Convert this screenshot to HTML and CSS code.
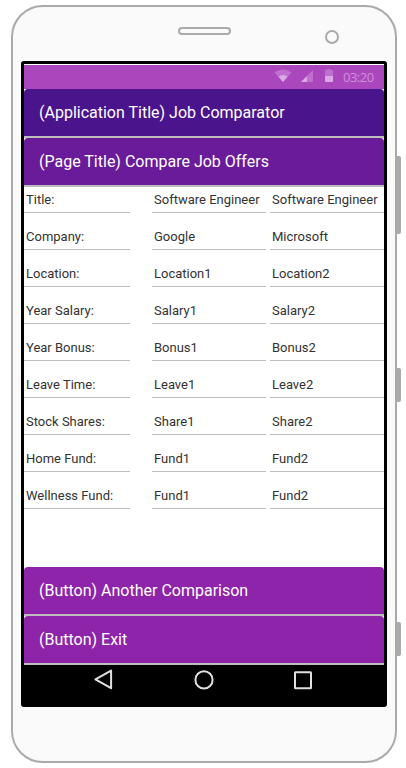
FILE: index.html
```html
<!DOCTYPE html>
<html lang="en">
<head>
<meta charset="utf-8">
<title>Job Comparator</title>
<link rel="stylesheet" href="styles.css">
</head>
<body>
<div class="phone">
  <span class="key key-volume"></span>
  <span class="key key-power"></span>
  <span class="key key-side"></span>
  <div class="phone-top">
    <span class="speaker"></span>
    <span class="camera"></span>
  </div>
  <div class="screen">
    <div class="status">
      <svg class="wifi" width="18" height="14" viewBox="0 0 18 14"><path d="M.4 3.6Q9-2.8 17.6 3.6L9 13z" fill="#bf6fce"/><path d="M4.4 7.6Q9 4.2 13.6 7.6L9 13z" fill="#dbaae3"/></svg>
      <svg class="signal" width="12" height="12" viewBox="0 0 12 12"><path d="M12 0v12H0z" fill="#bf6fce"/><path d="M6 6v6H0z" fill="#dbaae3"/></svg>
      <svg class="battery" width="8" height="13" viewBox="0 0 8 13"><path d="M0 2q0-1 1-1h1q0-1 1-1h2q1 0 1 1h1q1 0 1 1v5H0z" fill="#bf6fce"/><path d="M0 7h8v5q0 1-1 1H1q-1 0-1-1z" fill="#dbaae3"/></svg>
      <span class="clock">03:20</span>
    </div>
    <header class="bar bar-app">(Application Title) Job Comparator</header>
    <div class="bar bar-page">(Page Title) Compare Job Offers</div>
    <main class="offers">
      <span class="cell label">Title:</span><span class="cell">Software Engineer</span><span class="cell">Software Engineer</span>
      <span class="cell label">Company:</span><span class="cell">Google</span><span class="cell">Microsoft</span>
      <span class="cell label">Location:</span><span class="cell">Location1</span><span class="cell">Location2</span>
      <span class="cell label">Year Salary:</span><span class="cell">Salary1</span><span class="cell">Salary2</span>
      <span class="cell label">Year Bonus:</span><span class="cell">Bonus1</span><span class="cell">Bonus2</span>
      <span class="cell label">Leave Time:</span><span class="cell">Leave1</span><span class="cell">Leave2</span>
      <span class="cell label">Stock Shares:</span><span class="cell">Share1</span><span class="cell">Share2</span>
      <span class="cell label">Home Fund:</span><span class="cell">Fund1</span><span class="cell">Fund2</span>
      <span class="cell label">Wellness Fund:</span><span class="cell">Fund1</span><span class="cell">Fund2</span>
    </main>
    <button class="bar bar-action">(Button) Another Comparison</button>
    <button class="bar bar-action">(Button) Exit</button>
    <nav class="nav">
      <svg width="20" height="22" viewBox="0 0 20 22"><path d="M18.1 1.6v17.6L2.4 10.4z"/></svg>
      <svg width="20" height="22" viewBox="0 0 20 22"><circle cx="10" cy="10.9" r="8.6"/></svg>
      <svg width="20" height="22" viewBox="0 0 20 22"><rect x="2" y="3.3" width="16" height="16" rx=".5"/></svg>
    </nav>
  </div>
</div>
</body>
</html>
```
FILE: styles.css
```css
* { box-sizing: border-box; }

body {
  margin: 0;
  padding: 5px 9px 5px 11px;
  height: 768px;
  overflow: hidden;
  background: #fff;
  font-family: Roboto, sans-serif;
}

.phone {
  position: relative;
  width: 386px;
  height: 758px;
  padding: 0 8px;
  border: 2px solid #aaa;
  border-radius: 32px;
  background: #fafafa;
}

.key {
  position: absolute;
  left: 383px;
  width: 5px;
  border-radius: 0 2px 2px 0;
  background: #aaa;
}
.key-volume { top: 149px; height: 78px; }
.key-power { top: 361px; height: 34px; }
.key-side { top: 615px; height: 34px; }

.phone-top {
  display: flex;
  align-items: flex-start;
  height: 54px;
  padding: 20px 0 0 157px;
}
.speaker {
  width: 53px;
  height: 8px;
  border: 2px solid #aaa;
  border-radius: 4px;
}
.camera {
  width: 14px;
  height: 14px;
  margin: 3px 0 0 94px;
  border: 2px solid #aaa;
  border-radius: 50%;
}

.screen {
  display: flex;
  flex-direction: column;
  width: 366px;
  height: 646px;
  padding-top: 1px;
  border: 3px solid #000;
  border-radius: 3px;
  background: #fff;
}

.status {
  display: flex;
  align-items: flex-start;
  flex: none;
  height: 24px;
  padding-left: 250px;
  background: #ab47bc;
}
.wifi { margin-top: 4px; }
.signal { margin: 5px 0 0 9px; }
.battery { margin: 4px 0 0 12px; }
.clock {
  margin: 4px 0 0 10px;
  color: #d18fdb;
  font: 13px/17px "Open Sans", sans-serif;
  letter-spacing: -0.5px;
}

.bar {
  flex: none;
  width: 360px;
  height: 49px;
  margin: 0;
  padding: 0 15px;
  border: 0;
  border-radius: 4px 4px 0 0;
  box-shadow: inset 0 -2px #bdbdbd;
  color: #fff;
  font: 16px/47px Roboto, sans-serif;
  text-align: left;
}
.bar-app { background: #4a148c; }
.bar-page { background: #6a1b9a; }
.bar-action {
  padding-bottom: 2px;
  background: #8e24aa;
}

.offers {
  display: grid;
  grid-template-columns: 106px 114px 114px;
  grid-auto-rows: 26px;
  gap: 11px 4px;
  flex: none;
  height: 380px;
  justify-content: end;
  align-content: start;
}
.cell {
  padding-left: 2px;
  border-bottom: 1px solid #bdbdbd;
  color: #333;
  font-size: 13px;
  line-height: 25px;
  white-space: nowrap;
}
.label { margin: 0 18px 0 -18px; }

.nav {
  display: flex;
  flex: 1;
  justify-content: space-between;
  padding: 4px 71px 0 69px;
  background: #000;
}
.nav svg {
  fill: none;
  stroke: #e0e0e0;
  stroke-width: 2;
  stroke-linejoin: round;
}
.nav svg:nth-child(2) { margin-left: 2px; }
```
